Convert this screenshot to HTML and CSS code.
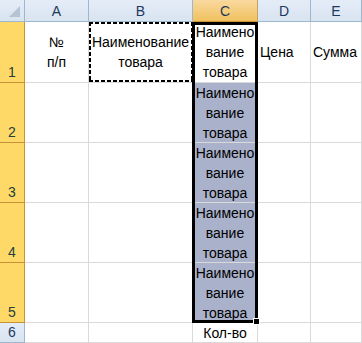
FILE: index.html
```html
<!DOCTYPE html>
<html>
<head>
<meta charset="utf-8">
<link rel="stylesheet" href="styles.css">
</head>
<body>
<div class="sheet">
  <div class="corner"><span class="tri"></span></div>
  <div class="ch">A</div>
  <div class="ch">B</div>
  <div class="ch ch-sel">C</div>
  <div class="ch">D</div>
  <div class="ch">E</div>

  <div class="rh rh-sel">1</div>
  <div class="cell center">№<br>п/п</div>
  <div class="cell center">Наименование<br>товара<span class="ants"></span></div>
  <div class="cell center c-active">Наимено<br>вание<br>товара<span class="selbox"><span class="handle"></span></span></div>
  <div class="cell left">Цена</div>
  <div class="cell left">Сумма</div>

  <div class="rh rh-sel">2</div>
  <div class="cell"></div>
  <div class="cell"></div>
  <div class="cell center c-shade">Наимено<br>вание<br>товара</div>
  <div class="cell"></div>
  <div class="cell"></div>

  <div class="rh rh-sel">3</div>
  <div class="cell"></div>
  <div class="cell"></div>
  <div class="cell center c-shade">Наимено<br>вание<br>товара</div>
  <div class="cell"></div>
  <div class="cell"></div>

  <div class="rh rh-sel">4</div>
  <div class="cell"></div>
  <div class="cell"></div>
  <div class="cell center c-shade">Наимено<br>вание<br>товара</div>
  <div class="cell"></div>
  <div class="cell"></div>

  <div class="rh rh-sel">5</div>
  <div class="cell"></div>
  <div class="cell"></div>
  <div class="cell center c-shade">Наимено<br>вание<br>товара</div>
  <div class="cell"></div>
  <div class="cell"></div>

  <div class="rh rh-last">6</div>
  <div class="cell"></div>
  <div class="cell"></div>
  <div class="cell center">Кол-во</div>
  <div class="cell"></div>
  <div class="cell"></div>
</div>
</body>
</html>
```

FILE: styles.css
```css
html, body {
  margin: 0;
  padding: 0;
  background: #ffffff;
}
.sheet {
  display: grid;
  grid-template-columns: 25px 64px 104px 65px 53px 51px;
  grid-template-rows: 22px 61px 60px 60px 60px 60px 20px;
  width: 362px;
  height: 343px;
  overflow: hidden;
  font-family: "Liberation Sans", Arial, sans-serif;
  font-size: 14px;
  color: #000;
}
.corner {
  background: linear-gradient(#e4ecf7, #d9e4f1);
  border-right: 1px solid #9eb6ce;
  border-bottom: 1px solid #9eb6ce;
  box-sizing: border-box;
  display: flex;
  justify-content: flex-end;
  align-items: flex-end;
  padding: 0 4px 4px 0;
}
.tri {
  width: 0;
  height: 0;
  border-left: 11px solid transparent;
  border-bottom: 11px solid #b6c3d3;
}
.ch {
  background: linear-gradient(#e4ecf7, #d9e4f1);
  border-right: 1px solid #9eb6ce;
  border-bottom: 1px solid #9eb6ce;
  box-sizing: border-box;
  display: flex;
  align-items: center;
  justify-content: center;
  color: #1e395b;
  font-size: 14px;
  padding-top: 1px;
}
.ch-sel {
  background: linear-gradient(#f9d99f, #f1c15f);
  border-right-color: #c5a260;
  border-bottom-color: #c89236;
}
.rh {
  box-sizing: border-box;
  border-right: 1px solid #c89236;
  border-bottom: 1px solid #c89236;
  background: #ffd967;
  display: flex;
  align-items: flex-end;
  justify-content: center;
  padding-bottom: 2px;
  color: #253f3c;
  font-size: 14px;
}
.rh-last {
  background: linear-gradient(#e4ecf7, #d9e4f1);
  border-right-color: #9eb6ce;
  border-bottom-color: #9eb6ce;
  color: #1e395b;
}
.cell {
  position: relative;
  box-sizing: border-box;
  border-right: 1px solid #d9d9d9;
  border-bottom: 1px solid #d9d9d9;
  line-height: 20px;
  display: flex;
  flex-direction: column;
  justify-content: center;
  white-space: nowrap;
}
.center {
  text-align: center;
}
.left {
  text-align: left;
  padding-left: 2px;
}
.c-shade {
  background: #aab2cb;
}
.ants {
  position: absolute;
  top: 0;
  left: 0;
  right: -1px;
  bottom: 0;
  z-index: 2;
  background:
    repeating-linear-gradient(90deg, #000 0 4px, #fff 4px 6px) top left / 100% 2px no-repeat,
    repeating-linear-gradient(90deg, #000 0 4px, #fff 4px 6px) bottom left / 100% 2px no-repeat,
    repeating-linear-gradient(180deg, #000 0 4px, #fff 4px 6px) top left / 2px 100% no-repeat,
    repeating-linear-gradient(180deg, #000 0 4px, #fff 4px 6px) top right / 2px 100% no-repeat;
}
.selbox {
  position: absolute;
  top: 0;
  left: -1px;
  width: 66px;
  height: 301px;
  box-sizing: border-box;
  border: 3px solid #000;
  z-index: 3;
}
.handle {
  position: absolute;
  right: -5px;
  bottom: -5px;
  width: 5px;
  height: 5px;
  background: #000;
  border: 1px solid #fff;
}
```
